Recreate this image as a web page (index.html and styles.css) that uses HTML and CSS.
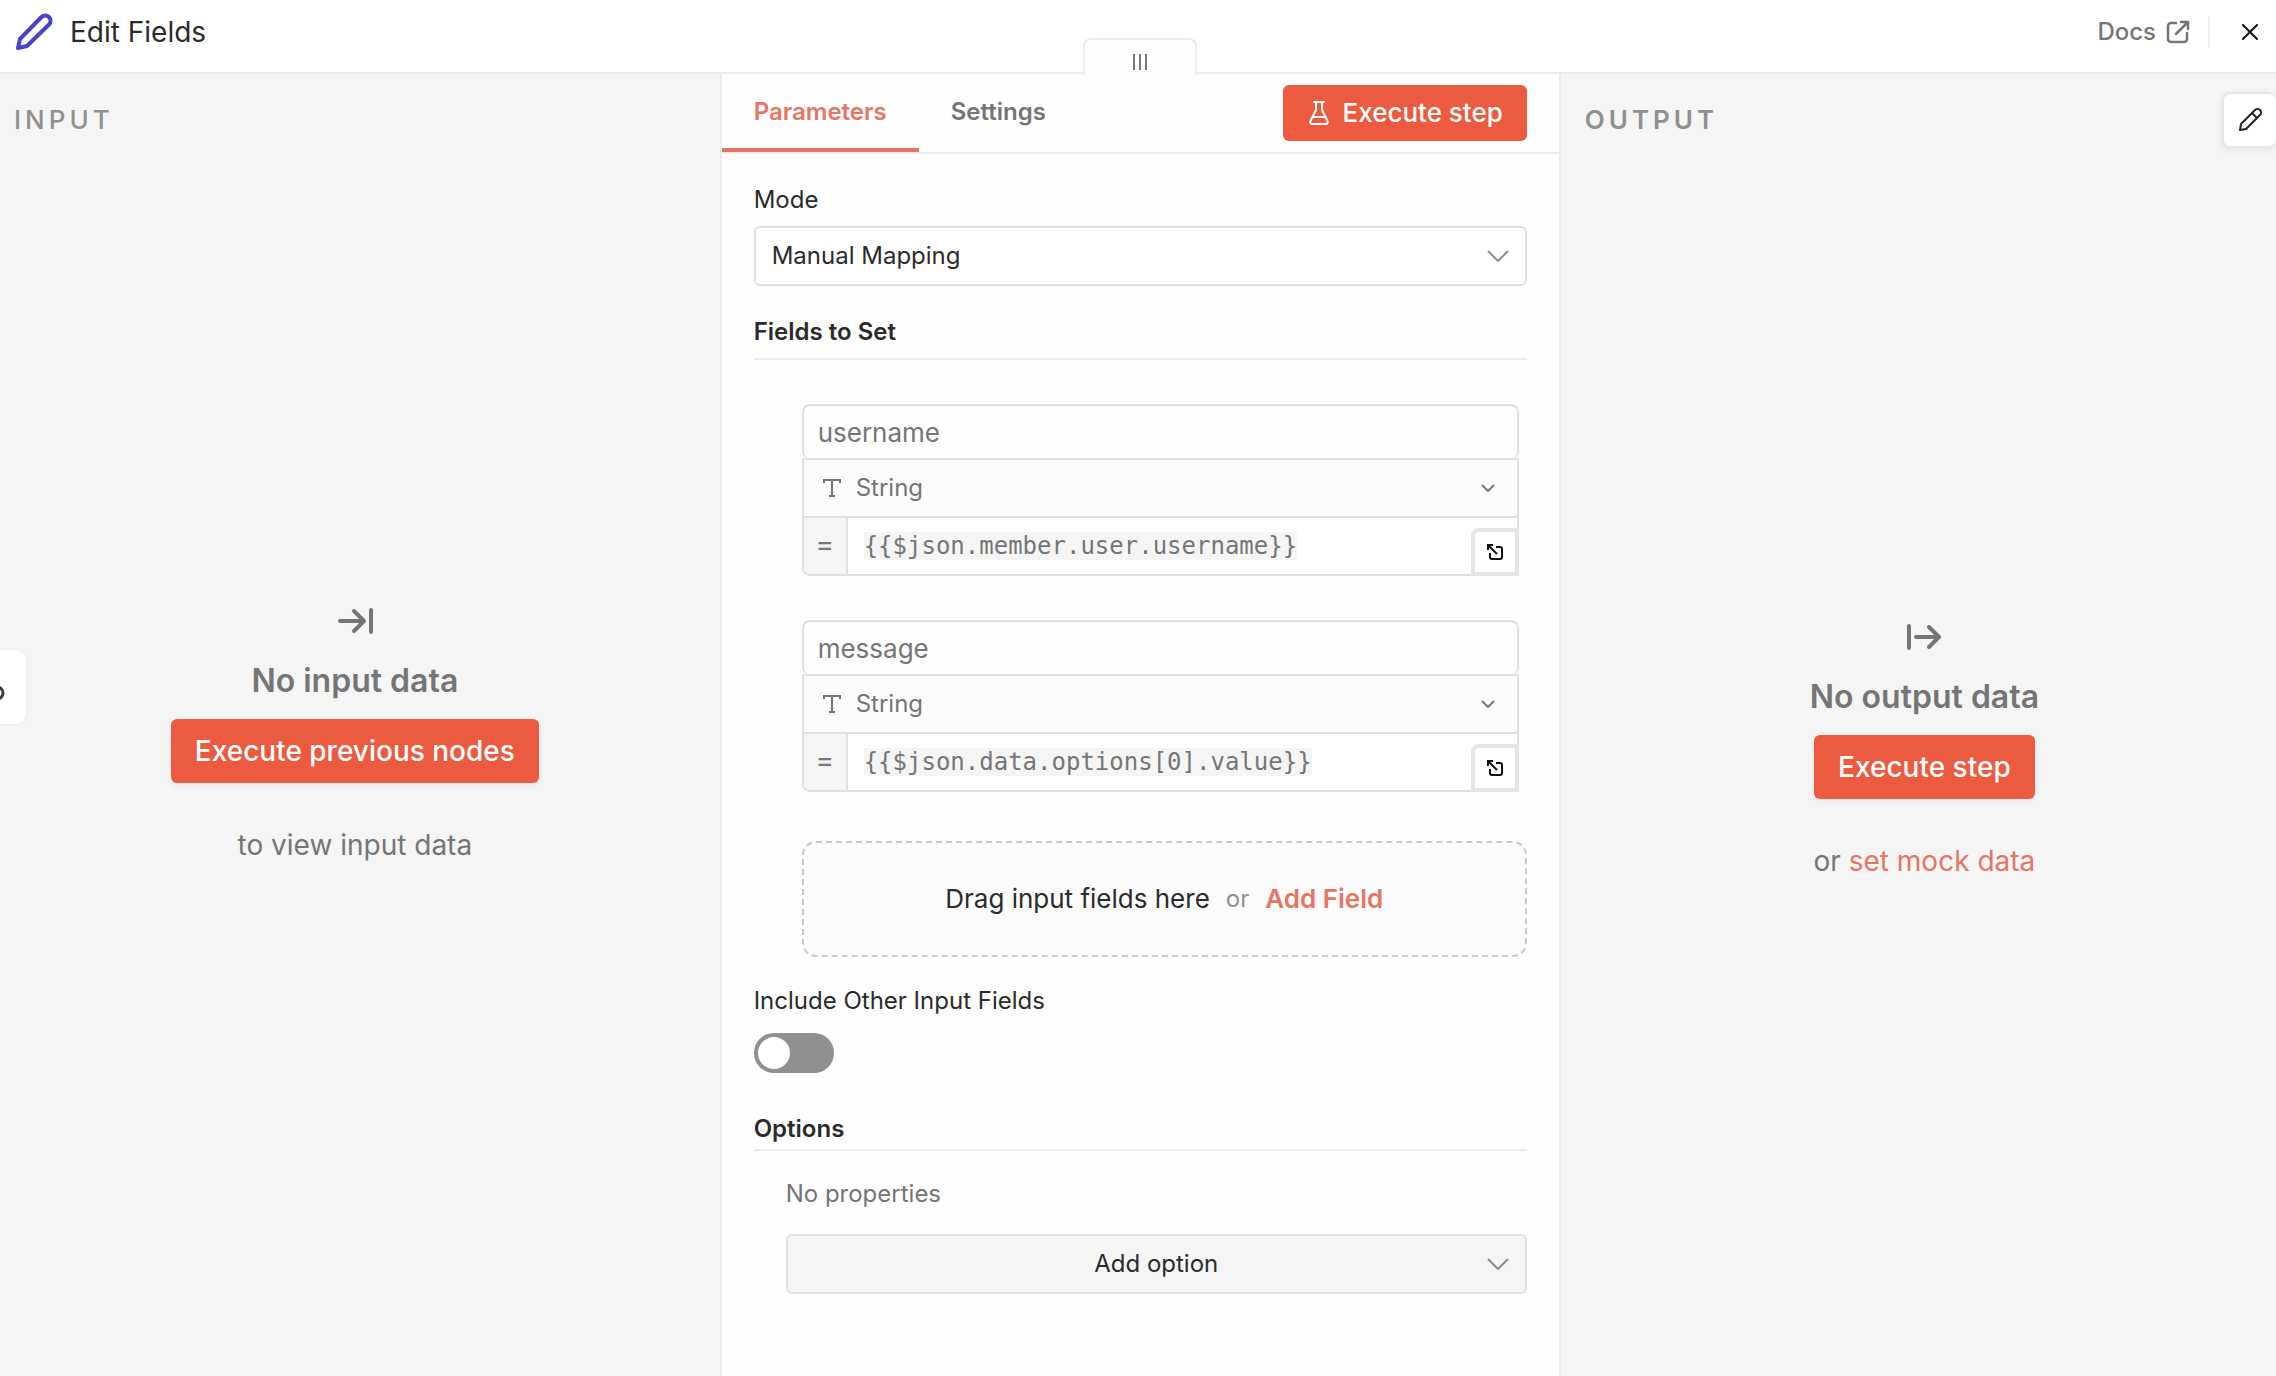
FILE: index.html
```html
<!DOCTYPE html>
<html lang="en">
<head>
    <meta charset="UTF-8" />
    <meta name="viewport" content="width=device-width, initial-scale=1.0" />
    <title>Edit Fields</title>
    <link rel="stylesheet" href="styles.css">
</head>
<body>

<header class="header">
    <svg class="node-icon" viewBox="0 0 40 40" fill="none" stroke="#4a43c9" stroke-width="4" stroke-linejoin="round">
        <path d="M4 36 L6 27 L27.500 5 A5.300 5.300 0 0 1 35 12.500 L13 34 Z" />
    </svg>
    <h1 class="node-title">Edit Fields</h1>
    <a class="docs-link" href="#">Docs
        <svg class="docs-icon" viewBox="0 0 24 24" fill="none" stroke="currentColor" stroke-width="2.500" stroke-linecap="round" stroke-linejoin="round">
            <path d="M10 3H5a3 3 0 0 0-3 3v13a3 3 0 0 0 3 3h13a3 3 0 0 0 3-3v-6" />
            <path d="M15 2h7v7M22 2L10 14" />
        </svg>
    </a>
    <button class="close-btn" aria-label="Close">
        <svg viewBox="0 0 16 16" fill="none" stroke="currentColor" stroke-width="2" stroke-linecap="round">
            <path d="M1 1l14 14M15 1L1 15" />
        </svg>
    </button>
</header>

<main class="panels">
    <section class="side input-panel">
        <h2 class="side-title">Input</h2>
        <div class="empty">
            <svg class="empty-icon" viewBox="0 0 36 28" fill="none" stroke="currentColor" stroke-width="4" stroke-linecap="round" stroke-linejoin="round">
                <path d="M3 14h24M17 4l10 10-10 10M34 3v22" />
            </svg>
            <h3>No input data</h3>
            <button class="btn btn-large">Execute previous nodes</button>
            <p>to view input data</p>
        </div>
        <button class="back-btn" aria-label="Previous node">
            <svg viewBox="0 0 8 16" fill="none" stroke="#3a3d45" stroke-width="3">
                <circle cx="-3" cy="8" r="6" />
            </svg>
        </button>
    </section>

    <section class="main-panel">
        <button class="drag-handle" aria-label="Move panel"><i></i><i></i><i></i></button>

        <nav class="tabs">
            <button class="tab active">Parameters</button>
            <button class="tab">Settings</button>
            <button class="btn btn-step">
                <svg class="flask" viewBox="0 0 20 24" fill="none" stroke="currentColor" stroke-width="2" stroke-linecap="round" stroke-linejoin="round">
                    <path d="M5 1h10M7 1v8L1.500 20a2 2 0 0 0 2 3h13a2 2 0 0 0 2-3L13 9V1M4 16h12" />
                </svg>
                Execute step
            </button>
        </nav>

        <form class="params">
            <label class="label" for="mode">Mode</label>
            <div class="select-wrap">
                <select class="select" id="mode"><option>Manual Mapping</option></select>
                <svg class="chevron" viewBox="0 0 22 12" fill="none" stroke="currentColor" stroke-width="2"><path d="M1 1l10 10L21 1" /></svg>
            </div>

            <h4 class="section-title">Fields to Set</h4>

            <div class="assignment">
                <input class="name" type="text" value="username" aria-label="Name">
                <div class="type">
                    <svg class="type-icon" viewBox="0 0 20 20" fill="none" stroke="currentColor" stroke-width="2"><path d="M2 5V2h16v3M10 2v16M7 18h6" /></svg>
                    <select aria-label="Type"><option>String</option></select>
                    <svg class="chevron small" viewBox="0 0 14 8" fill="none" stroke="currentColor" stroke-width="2"><path d="M1 1l6 6 6-6" /></svg>
                </div>
                <div class="value">
                    <span class="equals">=</span>
                    <input class="expression" type="text" size="30" value="{{$json.member.user.username}}" aria-label="Value">
                    <button class="expand-btn" type="button" aria-label="Open editor">
                        <svg viewBox="0 0 16 16" fill="none" stroke="currentColor" stroke-width="2"><path d="M1 6V1h5M1 1l9 9M9 3h4a2 2 0 0 1 2 2v8a2 2 0 0 1-2 2H5a2 2 0 0 1-2-2V9" /></svg>
                    </button>
                </div>
            </div>

            <div class="assignment">
                <input class="name" type="text" value="message" aria-label="Name">
                <div class="type">
                    <svg class="type-icon" viewBox="0 0 20 20" fill="none" stroke="currentColor" stroke-width="2"><path d="M2 5V2h16v3M10 2v16M7 18h6" /></svg>
                    <select aria-label="Type"><option>String</option></select>
                    <svg class="chevron small" viewBox="0 0 14 8" fill="none" stroke="currentColor" stroke-width="2"><path d="M1 1l6 6 6-6" /></svg>
                </div>
                <div class="value">
                    <span class="equals">=</span>
                    <input class="expression" type="text" size="31" value="{{$json.data.options[0].value}}" aria-label="Value">
                    <button class="expand-btn" type="button" aria-label="Open editor">
                        <svg viewBox="0 0 16 16" fill="none" stroke="currentColor" stroke-width="2"><path d="M1 6V1h5M1 1l9 9M9 3h4a2 2 0 0 1 2 2v8a2 2 0 0 1-2 2H5a2 2 0 0 1-2-2V9" /></svg>
                    </button>
                </div>
            </div>

            <div class="drop-area">
                <span>Drag input fields here</span>
                <span class="or">or</span>
                <button class="add-field" type="button">Add Field</button>
            </div>

            <label class="label" for="include">Include Other Input Fields</label>
            <input class="switch" type="checkbox" id="include">

            <h4 class="section-title options-title">Options</h4>
            <div class="options">
                <p>No properties</p>
                <div class="select-wrap">
                    <select class="select add-option" aria-label="Add option"><option>Add option</option></select>
                    <svg class="chevron" viewBox="0 0 22 12" fill="none" stroke="currentColor" stroke-width="2"><path d="M1 1l10 10L21 1" /></svg>
                </div>
            </div>
        </form>
    </section>

    <section class="side output-panel">
        <h2 class="side-title">Output</h2>
        <div class="empty">
            <svg class="empty-icon" viewBox="0 0 36 28" fill="none" stroke="currentColor" stroke-width="4" stroke-linecap="round" stroke-linejoin="round">
                <path d="M3 3v22M10 14h23M23 4l10 10-10 10" />
            </svg>
            <h3>No output data</h3>
            <button class="btn btn-large">Execute step</button>
            <p>or <a href="#">set mock data</a></p>
        </div>
        <button class="edit-btn" aria-label="Edit output">
            <svg viewBox="0 0 24 24" fill="none" stroke="currentColor" stroke-width="2" stroke-linejoin="round">
                <path d="M2 22l1-6L17 2a3.500 3.500 0 0 1 5 5L8 21zM14 5l5 5" />
            </svg>
        </button>
    </section>
</main>

</body>
</html>
```
FILE: styles.css
```css
* {
    box-sizing: border-box;
}

body {
    font-family: Inter, "Liberation Sans", sans-serif;
    font-size: 24px;
    line-height: 32px;
    color: #2b2b2b;
    margin: 0;
    min-height: 100vh;
    display: flex;
    flex-direction: column;
    overflow-x: hidden;
}

h1, h2, h3, h4, p {
    margin: 0;
}

button, input, select {
    font: inherit;
    color: inherit;
    margin: 0;
    padding: 0;
    border: none;
    background: none;
}

select {
    appearance: none;
}

/* Header */

.header {
    display: flex;
    align-items: center;
    height: 74px;
    padding: 0 16px 8px 14px;
    background-color: #fff;
    border-bottom: 2px solid #ebebeb;
}

.node-icon {
    width: 40px;
    height: 40px;
}

.node-title {
    flex: 1;
    margin-left: 16px;
    font-size: 28px;
    font-weight: 400;
}

.docs-link {
    display: flex;
    align-items: center;
    gap: 10px;
    padding-right: 18px;
    border-right: 2px solid #f0f0f0;
    color: #757575;
    font-weight: 500;
    text-decoration: none;
}

.docs-icon {
    width: 24px;
    height: 24px;
}

.close-btn {
    width: 20px;
    height: 32px;
    margin-left: 30px;
    color: #111;
}

.close-btn svg {
    display: block;
    width: 16px;
    height: 16px;
    margin: 0 auto;
}

/* Panels */

.panels {
    flex: 1;
    display: grid;
    grid-template-columns: 160fr 187fr 159fr;
}

.side {
    position: relative;
    display: flex;
    flex-direction: column;
    padding: 30px 24px 30px 14px;
    background-color: #f5f5f5;
}

.side-title {
    color: #909090;
    font-size: 26px;
    font-weight: 600;
    letter-spacing: 4px;
    text-transform: uppercase;
}

.input-panel .side-title {
    font-weight: 500;
}

.output-panel {
    padding-left: 24px;
    padding-right: 12px;
}

.empty {
    flex: 1;
    display: flex;
    flex-direction: column;
    align-items: center;
    justify-content: center;
    padding-bottom: 12px;
    color: #757575;
    font-size: 28px;
}

.output-panel .empty {
    padding-bottom: 0;
    padding-top: 20px;
}

.empty-icon {
    width: 36px;
    height: 28px;
}

.empty h3 {
    margin: 30px 0 22px;
    font-size: 32px;
    font-weight: 600;
}

.empty p {
    margin-top: 46px;
    padding-bottom: 2px;
}

.empty a {
    color: #e67563;
    text-decoration: none;
}

.btn {
    background-color: #ec5b40;
    color: #fff;
    border-radius: 6px;
    font-weight: 500;
    cursor: pointer;
}

.btn-large {
    height: 64px;
    padding: 0 24px;
    font-size: 28px;
    box-shadow: 0 2px 6px rgba(0, 0, 0, 0.06);
}

.back-btn {
    position: absolute;
    left: 0;
    top: 574px;
    width: 28px;
    height: 78px;
    padding-top: 12px;
    background-color: #fff;
    border: 2px solid #f0f0f0;
    border-left: none;
    border-radius: 0 12px 12px 0;
    text-align: left;
}

.back-btn svg {
    display: block;
    width: 8px;
    height: 16px;
}

.edit-btn {
    position: absolute;
    right: 0;
    top: 18px;
    width: 54px;
    height: 56px;
    color: #222;
    background-color: #fff;
    border: 2px solid #e6e6e6;
    border-right: none;
    border-radius: 8px;
    box-shadow: 0 2px 6px rgba(0, 0, 0, 0.08);
}

.edit-btn svg {
    display: block;
    width: 24px;
    height: 24px;
    margin: 0 auto;
}

/* Middle panel */

.main-panel {
    position: relative;
    background-color: #fefefe;
    border: 2px solid #ebebeb;
    border-top: none;
    border-bottom: none;
}

.drag-handle {
    position: absolute;
    left: 50%;
    top: -36px;
    width: 114px;
    height: 37px;
    display: flex;
    justify-content: center;
    align-items: center;
    gap: 4px;
    padding-top: 8px;
    transform: translateX(-50%);
    background-color: #fefefe;
    border: 2px solid #ebebeb;
    border-bottom: none;
    border-radius: 8px 8px 0 0;
}

.drag-handle i {
    width: 2px;
    height: 16px;
    background-color: #777;
}

.tabs {
    display: flex;
    align-items: center;
    height: 80px;
    padding-right: 32px;
    border-bottom: 2px solid #ebebeb;
}

.tab {
    align-self: stretch;
    padding: 2px 32px 0;
    color: #757575;
    font-weight: 600;
    border-bottom: 4px solid transparent;
    cursor: pointer;
}

.tab.active {
    color: #e67563;
    border-color: #e67563;
}

.btn-step {
    display: flex;
    align-items: center;
    gap: 14px;
    height: 56px;
    margin-left: auto;
    padding: 0 24px 0 26px;
    font-size: 26px;
}

.flask {
    width: 20px;
    height: 24px;
}

.params {
    padding: 30px 32px;
}

.label {
    display: block;
}

.select-wrap {
    position: relative;
    margin-top: 10px;
}

.select {
    display: block;
    width: 100%;
    height: 60px;
    padding: 0 16px;
    border: 2px solid #dfdfdf;
    border-radius: 6px;
    background-color: #fff;
}

.chevron {
    position: absolute;
    right: 18px;
    top: 50%;
    width: 22px;
    height: 12px;
    margin-top: -6px;
    color: #8c8c8c;
    pointer-events: none;
}

.chevron.small {
    right: 22px;
    width: 14px;
    height: 8px;
    margin-top: -4px;
    color: #757575;
}

.section-title {
    margin-top: 30px;
    padding-bottom: 10px;
    font-size: 24px;
    font-weight: 600;
    border-bottom: 2px solid #ebebeb;
}

.assignment {
    margin: 44px 8px 0 48px;
    color: #757575;
}

.name {
    display: block;
    width: 100%;
    height: 54px;
    padding: 0 14px;
    font-size: 26px;
    border: 2px solid #dfdfdf;
    border-bottom: none;
    border-radius: 8px 8px 6px 6px;
}

.type {
    position: relative;
    display: flex;
    align-items: center;
    height: 60px;
    padding-left: 18px;
    gap: 14px;
    background-color: #fcfcfc;
    border: 2px solid #dfdfdf;
}

.type-icon {
    width: 20px;
    height: 20px;
}

.type select {
    flex: 1;
}

.value {
    position: relative;
    display: flex;
    align-items: center;
    height: 58px;
    border: 2px solid #dfdfdf;
    border-top: none;
    border-radius: 0 0 6px 8px;
    background-color: #fff;
}

.equals {
    align-self: stretch;
    width: 44px;
    padding-top: 10px;
    background-color: #f5f5f5;
    border-right: 2px solid #dfdfdf;
    border-radius: 0 0 0 6px;
    font-size: 28px;
    text-align: center;
}

.expression {
    field-sizing: content;
    margin-left: 16px;
    background-color: #f5f5f5;
    font-family: "DejaVu Sans Mono", monospace;
    font-size: 24px;
    line-height: 28px;
}

.expand-btn {
    position: absolute;
    right: -2px;
    bottom: -2px;
    width: 48px;
    height: 48px;
    color: #111;
    background-color: #fff;
    border: 4px solid #e6e6e6;
    border-top-left-radius: 8px;
}

.expand-btn svg {
    display: block;
    width: 16px;
    height: 16px;
    margin: 0 auto;
}

.drop-area {
    display: flex;
    align-items: center;
    justify-content: center;
    gap: 16px;
    height: 116px;
    margin: 49px 0 28px 48px;
    background-color: #fcfcfc;
    border: 2px dashed #c8c8c8;
    border-radius: 14px;
    font-size: 26px;
}

.or {
    color: #909090;
    font-size: 24px;
}

.add-field {
    color: #e67563;
    font-weight: 600;
    cursor: pointer;
}

.switch {
    appearance: none;
    display: block;
    width: 80px;
    height: 40px;
    margin-top: 16px;
    padding: 4px;
    border-radius: 20px;
    background-color: #909090;
}

.switch::before {
    content: "";
    display: block;
    width: 32px;
    height: 32px;
    border-radius: 50%;
    background-color: #fff;
}

.switch:checked::before {
    margin-left: auto;
}

.options-title {
    margin-top: 40px;
    padding-bottom: 4px;
}

.options {
    padding: 27px 0 0 32px;
}

.options p {
    color: #757575;
}

.options .select-wrap {
    margin-top: 24px;
}

.add-option {
    background-color: #f5f5f5;
    text-align-last: center;
}
```
